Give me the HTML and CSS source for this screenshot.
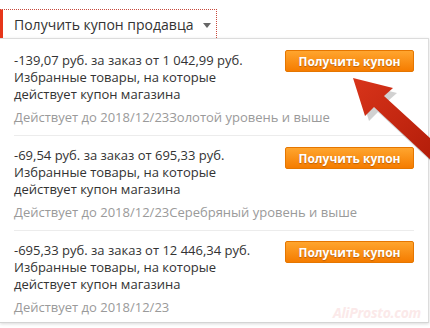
FILE: index.html
```html
<!DOCTYPE html>
<html lang="ru">
  <head>
    <meta charset="UTF-8" />
    <meta name="viewport" content="width=device-width, initial-scale=1.0" />
    <title>Купоны продавца</title>
    <link rel="stylesheet" href="styles.css">
  </head>
  <body>
    <div class="coupon-box">
      <div class="tabs">
        <div class="tab">
          <span>Получить купон продавца</span>
          <i class="caret"></i>
        </div>
      </div>

      <div class="coupon-list">
        <div class="coupon">
          <div class="coupon-info">
            <p class="coupon-title">-139,07 руб. за заказ от 1 042,99 руб.</p>
            <p class="coupon-desc">Избранные товары, на которые<br />действует купон магазина</p>
            <p class="coupon-date">Действует до 2018/12/23Золотой уровень и выше</p>
          </div>
          <button class="get-btn first">Получить купон</button>
        </div>

        <div class="coupon">
          <div class="coupon-info">
            <p class="coupon-title">-69,54 руб. за заказ от 695,33 руб.</p>
            <p class="coupon-desc">Избранные товары, на которые<br />действует купон магазина</p>
            <p class="coupon-date">Действует до 2018/12/23Серебряный уровень и выше</p>
          </div>
          <button class="get-btn">Получить купон</button>
        </div>

        <div class="coupon last">
          <div class="coupon-info">
            <p class="coupon-title">-695,33 руб. за заказ от 12 446,34 руб.</p>
            <p class="coupon-desc">Избранные товары, на которые<br />действует купон магазина</p>
            <p class="coupon-date">Действует до 2018/12/23</p>
          </div>
          <button class="get-btn third">Получить купон</button>
        </div>
      </div>

      <div class="watermark">AliProsto.com</div>

      <!-- pointer arrow drawn over the page -->
      <svg class="arrow" width="430" height="328" viewBox="0 0 430 328">
        <defs>
          <linearGradient id="arrowFill" x1="0" y1="0" x2="1" y2="1">
            <stop offset="0" stop-color="#d8341a" />
            <stop offset="1" stop-color="#b01b08" />
          </linearGradient>
        </defs>
        <polygon
          points="355,80 395,90 386,98 445,152 435,164 376,109 367,118"
          fill="rgba(0,0,0,0.18)"
          transform="translate(2,3)"
        />
        <polygon
          points="353,78 393,88 384,96 443,150 433,162 374,107 365,116"
          fill="url(#arrowFill)"
        />
      </svg>
    </div>
  </body>
</html>
```

FILE: styles.css
```css
* {
  margin: 0;
  padding: 0;
  box-sizing: border-box;
  font-family: "Open Sans", Arial, sans-serif;
}
body {
  background: white;
  width: 430px;
  height: 328px;
  overflow: hidden;
}
.coupon-box {
  position: relative;
  width: 430px;
  height: 328px;
}
.tabs {
  display: flex;
  padding-top: 9px;
}
.tab {
  display: flex;
  align-items: center;
  height: 29px;
  padding: 0 5px 0 11px;
  border-left: 3px solid #e6361a;
  border-top: 1px dotted #c8483a;
  border-right: 1px dotted #c8483a;
  font-size: 14px;
  color: #333;
}
.tab span {
  padding-top: 1px;
}
.caret {
  width: 0;
  height: 0;
  margin-left: 10px;
  margin-top: 2px;
  border-left: 4px solid transparent;
  border-right: 4px solid transparent;
  border-top: 5px solid #666;
}
.coupon-list {
  width: 429px;
  padding-top: 2px;
  border-top: 1px solid #dcdcdc;
  border-right: 1px solid #dcdcdc;
  border-bottom: 1px solid #d4d4d4;
  box-shadow: 0 1px 3px rgba(0, 0, 0, 0.15);
}
.coupon {
  display: flex;
  justify-content: space-between;
  align-items: flex-start;
  margin: 0 14px;
  padding: 11px 0 9px;
  border-bottom: 1px solid #ececec;
}
.coupon.last {
  border-bottom: none;
  padding-bottom: 6px;
}
.coupon-info {
  flex: 1;
  min-width: 0;
  font-size: 13px;
  line-height: 17px;
  color: #333;
}
.coupon-date {
  margin-top: 5px;
  line-height: 18px;
  color: #9a9a9a;
  white-space: nowrap;
}
.get-btn {
  flex-shrink: 0;
  width: 129px;
  height: 22px;
  border: 1px solid #e57600;
  border-radius: 2px;
  background: linear-gradient(#ffa52e, #f57c00);
  color: white;
  font-family: "Open Sans", Arial, sans-serif;
  font-size: 12px;
  font-weight: bold;
  text-shadow: 0 1px 1px rgba(120, 50, 0, 0.45);
  cursor: pointer;
}
.get-btn.first {
  margin-top: -2px;
}
.get-btn.third {
  margin-top: -1px;
}
.watermark {
  position: absolute;
  right: 9px;
  bottom: 6px;
  font-size: 14px;
  font-style: italic;
  font-weight: bold;
  color: #fbe9e9;
  letter-spacing: -0.3px;
}
.arrow {
  position: absolute;
  left: 0;
  top: 0;
  pointer-events: none;
}
```
